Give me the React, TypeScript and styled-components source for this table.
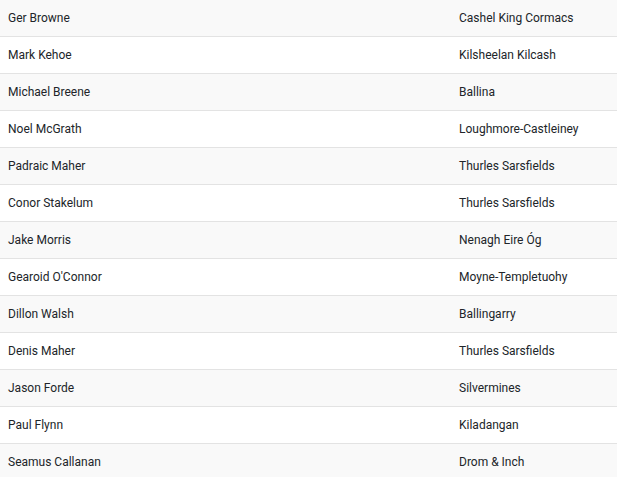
import React from "react";
import styled, { createGlobalStyle } from "styled-components";

const Global = createGlobalStyle`
  html, body { margin: 0; padding: 0; background: #fff; }
  body { font-family: Roboto, "Liberation Sans", sans-serif; }
`;

const Table = styled.div`
  width: 617px;
  font-family: Roboto, "Liberation Sans", sans-serif;
  font-size: 12px;
  color: #212529;
`;

const Row = styled.div<{ $striped: boolean }>`
  display: grid;
  grid-template-columns: 451px 1fr;
  align-items: center;
  height: 36px;
  background: ${(p) => (p.$striped ? "#f9f9f9" : "#ffffff")};
  border-bottom: 1px solid #e3e3e3;
`;

const Cell = styled.div`
  padding: 0 8px;
  line-height: 16px;
  white-space: nowrap;
`;

const data: [string, string][] = [
  ["Ger Browne", "Cashel King Cormacs"],
  ["Mark Kehoe", "Kilsheelan Kilcash"],
  ["Michael Breene", "Ballina"],
  ["Noel McGrath", "Loughmore-Castleiney"],
  ["Padraic Maher", "Thurles Sarsfields"],
  ["Conor Stakelum", "Thurles Sarsfields"],
  ["Jake Morris", "Nenagh Eire Óg"],
  ["Gearoid O'Connor", "Moyne-Templetuohy"],
  ["Dillon Walsh", "Ballingarry"],
  ["Denis Maher", "Thurles Sarsfields"],
  ["Jason Forde", "Silvermines"],
  ["Paul Flynn", "Kiladangan"],
  ["Seamus Callanan", "Drom & Inch"],
];

export default function App() {
  return (
    <>
      <Global />
      <Table>
        {data.map(([n, c], i) => (
          <Row key={i} $striped={i % 2 === 0}>
            <Cell>{n}</Cell>
            <Cell>{c}</Cell>
          </Row>
        ))}
      </Table>
    </>
  );
}
